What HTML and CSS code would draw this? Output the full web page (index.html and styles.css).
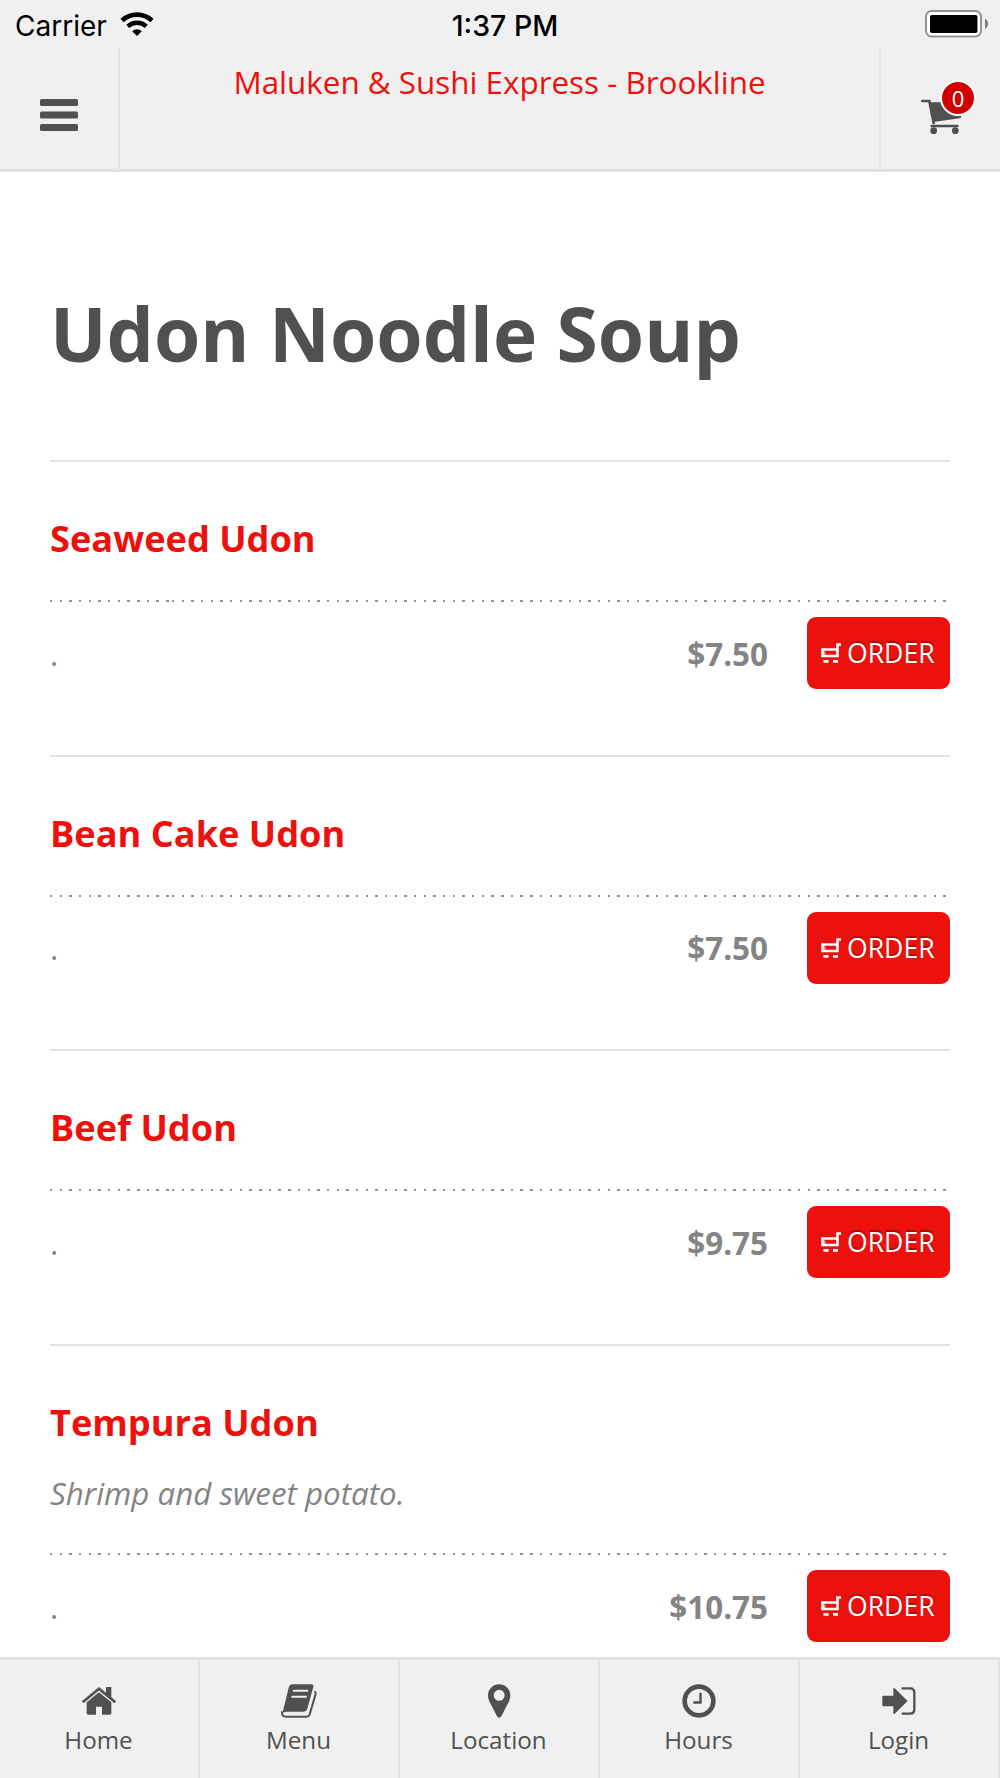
FILE: index.html
```
<!DOCTYPE html>
<html lang="en">
<head>
    <meta charset="UTF-8">
    <meta name="viewport" content="width=device-width, initial-scale=1.0">
    <title>Maluken &amp; Sushi Express - Brookline</title>
    <link rel="stylesheet" href="styles.css">
</head>
<body>

    <svg class="sprite" aria-hidden="true">
        <symbol id="order-cart" viewBox="0 0 20 20">
            <path d="M20 1.500h-3.500v5H1.500v6.500H16.500V6" fill="none" stroke="#fff" stroke-width="2.600"/>
            <path d="M3.500 8.500v3.500" fill="none" stroke="#fff" stroke-opacity=".6" stroke-width="2"/>
            <path d="M2.500 18.400h5M12 18.400h5" stroke="#fff" stroke-width="2.600"/>
        </symbol>
    </svg>

    <div class="screen">
        <div class="status-bar">
            <div class="carrier">
                <span>Carrier</span>
                <svg class="wifi" viewBox="0 0 34 24">
                    <path d="M2 8.500a22 22 0 0 1 30 0" fill="none" stroke="#000" stroke-width="4.600"/>
                    <path d="M7.700 14.400a13.500 13.500 0 0 1 18.600 0" fill="none" stroke="#000" stroke-width="4.400"/>
                    <path d="M12.200 19.200a7 7 0 0 1 9.600 0L17 24z"/>
                </svg>
            </div>
            <div class="time">1:37 PM</div>
            <div class="power">
                <svg class="battery" viewBox="0 0 64 28">
                    <rect x="1" y="1" width="55" height="25.500" rx="5.500" fill="#fff" stroke="#929292" stroke-width="2"/>
                    <rect x="5" y="5" width="47.500" height="18" rx="2"/>
                    <path d="M60 8.500c4 2 4 8.500 0 10.500z" fill="#808080"/>
                </svg>
            </div>
        </div>

        <header class="top-bar">
            <a class="menu-toggle">
                <svg viewBox="0 0 38 32">
                    <rect width="38" height="7" rx="1.500"/>
                    <rect y="12.500" width="38" height="7" rx="1.500"/>
                    <rect y="25" width="38" height="7" rx="1.500"/>
                </svg>
            </a>
            <div class="store-name">Maluken &amp; Sushi Express - Brookline</div>
            <a class="cart">
                <svg viewBox="0 0 126 108">
                    <path d="M4 6h21l13 66" fill="none" stroke="#505050" stroke-width="8" stroke-linecap="round"/>
                    <path d="M25 10h95v44q0 4-4 4L37 69z"/>
                    <path d="M32 81h77" stroke="#505050" stroke-width="8" stroke-linecap="round"/>
                    <circle cx="38" cy="95" r="10"/>
                    <circle cx="103" cy="95" r="10"/>
                </svg>
                <span class="badge">0</span>
            </a>
        </header>

        <main class="content">
            <h1>Udon Noodle Soup</h1>

            <section class="item">
                <h2>Seaweed Udon</h2>
                <div class="order-row">
                    <span class="size">.</span>
                    <span class="price">$7.50</span>
                    <a class="order-btn"><svg><use href="#order-cart"/></svg>ORDER</a>
                </div>
            </section>

            <section class="item">
                <h2>Bean Cake Udon</h2>
                <div class="order-row">
                    <span class="size">.</span>
                    <span class="price">$7.50</span>
                    <a class="order-btn"><svg><use href="#order-cart"/></svg>ORDER</a>
                </div>
            </section>

            <section class="item">
                <h2>Beef Udon</h2>
                <div class="order-row">
                    <span class="size">.</span>
                    <span class="price">$9.75</span>
                    <a class="order-btn"><svg><use href="#order-cart"/></svg>ORDER</a>
                </div>
            </section>

            <section class="item">
                <h2>Tempura Udon</h2>
                <p class="description">Shrimp and sweet potato.</p>
                <div class="order-row">
                    <span class="size">.</span>
                    <span class="price">$10.75</span>
                    <a class="order-btn"><svg><use href="#order-cart"/></svg>ORDER</a>
                </div>
            </section>
        </main>

        <nav class="tab-bar">
            <a class="tab">
                <svg viewBox="0 0 108 108">
                    <path d="M75 12h16v36L75 35z"/>
                    <path d="M5 58l49-41 49 41" fill="none" stroke="#505050" stroke-width="8"/>
                    <path d="M17 58l37-30 37 30v33q0 4-4 4H63V71H45v24H21q-4 0-4-4z"/>
                </svg>
                <span>Home</span>
            </a>
            <a class="tab">
                <svg viewBox="0 0 108 108">
                    <path d="M34 4h57q8 0 6 8L79 77q-3 9-12 9H16q-10 0-12 6L23 14q3-10 11-10z"/>
                    <path d="M4 85q-4 16 12 16h61q7 0 9-7l18-61q1-6-4-8" fill="none" stroke="#505050" stroke-width="6"/>
                    <path d="M38 23.500h41M34 41h41" stroke="#f0f0f0" stroke-width="6" stroke-linecap="round"/>
                </svg>
                <span>Menu</span>
            </a>
            <a class="tab">
                <svg viewBox="0 0 108 108">
                    <path fill-rule="evenodd" d="M21 37a33.500 33 0 0 1 67 0c0 8-2 14-5 20l-22 43q-6.500 8-13 0L26 57c-3-6-5-12-5-20zM38 37a16.500 16.500 0 0 0 33 0 16.500 16.500 0 0 0-33 0z"/>
                </svg>
                <span>Location</span>
            </a>
            <a class="tab">
                <svg viewBox="0 0 108 108">
                    <circle cx="54" cy="54" r="43" fill="none" stroke="#505050" stroke-width="14"/>
                    <path d="M58.500 29v29.500H37" fill="none" stroke="#505050" stroke-width="7"/>
                </svg>
                <span>Hours</span>
            </a>
            <a class="tab">
                <svg viewBox="0 0 108 108">
                    <path d="M7 38h30V18q0-5 4-2l39 38-39 38q-4 3-4-2V70H7q-3 0-3-3V41q0-3 3-3z"/>
                    <path d="M62 16h25q13 0 13 13v50q0 13-13 13H62" fill="none" stroke="#505050" stroke-width="7"/>
                </svg>
                <span>Login</span>
            </a>
        </nav>
    </div>

</body>
</html>
```
FILE: styles.css
```
* {
    box-sizing: border-box;
}
body {
    margin: 0;
    font-family: "Open Sans", "Noto Sans", sans-serif;
    background: #fff;
    color: #505050;
}
h1, h2, p {
    margin: 0;
}
svg {
    display: block;
    fill: currentColor;
}
.sprite {
    display: none;
}
.screen {
    display: flex;
    flex-direction: column;
    height: 1778px;
    overflow: hidden;
}

/* Phone status bar */
.status-bar {
    display: grid;
    grid-template-columns: 1fr auto 1fr;
    height: 48px;
    padding: 0 11px 0 15px;
    background: #f0f0f0;
    color: #000;
    font-family: Inter, "Liberation Sans", sans-serif;
    font-size: 28px;
    line-height: 52px;
}
.carrier {
    display: flex;
    gap: 13px;
}
.wifi {
    width: 34px;
    height: 24px;
    margin-top: 12px;
}
.time {
    padding-left: 6px;
    font-size: 28.5px;
    font-weight: 500;
}
.power {
    display: flex;
    justify-content: flex-end;
}
.battery {
    width: 64px;
    height: 28px;
    margin-top: 10px;
}

/* Header */
.top-bar {
    display: flex;
    flex-shrink: 0;
    height: 124px;
    background: #f0f0f0;
    border-bottom: 3px solid #e3e3e3;
}
.menu-toggle {
    width: 120px;
    padding: 51px 0 0 40px;
    border-right: 2px solid #e3e3e3;
}
.menu-toggle svg {
    width: 38px;
    height: 32px;
}
.store-name {
    flex: 1;
    padding-top: 12px;
    text-align: center;
    color: #ed110e;
    font-size: 31.4px;
    line-height: 44px;
}
.cart {
    position: relative;
    width: 121px;
    padding: 51px 0 0 40px;
    border-left: 2px solid #e3e3e3;
}
.cart svg {
    width: 42px;
    height: 36px;
}
.badge {
    position: absolute;
    left: 59px;
    top: 32px;
    width: 36px;
    height: 36px;
    border: 2px solid #fff;
    border-radius: 50%;
    background: #d00000;
    color: #fff;
    font-size: 22px;
    line-height: 32px;
    text-align: center;
}

/* Menu list */
.content {
    flex: 1;
    min-height: 0;
    padding: 116px 50px 0;
    overflow: hidden;
}
h1 {
    height: 172px;
    font-size: 74.9px;
    line-height: 90px;
}
.item {
    height: 294.7px;
    padding-top: 51px;
    border-top: 2px solid #e3e3e3;
}
.item h2 {
    height: 87px;
    color: #ed110e;
    font-size: 36.2px;
    line-height: 50px;
}
.description {
    height: 68px;
    color: #848484;
    font-size: 31.3px;
    font-style: italic;
    line-height: 18px;
}
.order-row {
    --dots: repeating-linear-gradient(90deg, #949494 0 2.4px, transparent 2.4px 9.68px);
    display: flex;
    align-items: center;
    height: 89px;
    padding-top: 17px;
    background-image: var(--dots), var(--dots), var(--dots);
    background-size: 122px 2px, 597px 2px, 180px 2px;
    background-position: 0 0, 122px 0, 719px 0;
    background-repeat: no-repeat;
    color: #848484;
    font-size: 31.4px;
}
.description + .order-row {
    margin-top: 1px;
}
.size {
    flex: 1;
}
.price {
    margin-right: 39px;
    font-weight: bold;
}
.order-btn {
    display: flex;
    align-items: center;
    gap: 6px;
    width: 143px;
    height: 72px;
    padding-left: 14px;
    border-radius: 9px;
    background: #ed110e;
    color: #fff;
    font-size: 26.6px;
    text-shadow: 0 -2px 1px rgba(0, 0, 0, 0.3);
}
.order-btn svg {
    width: 20px;
    height: 20px;
}

/* Bottom tabs */
.tab-bar {
    display: flex;
    height: 121px;
    background: #f0f0f0;
    border-top: 3px solid #e3e3e3;
}
.tab {
    display: flex;
    flex: 1;
    flex-direction: column;
    align-items: center;
    padding: 23px 1px 0 0;
    border-right: 2px solid #e3e3e3;
    font-size: 24.2px;
    line-height: 34px;
}
.tab svg {
    width: 36px;
    height: 36px;
    margin-bottom: 4px;
}
```
